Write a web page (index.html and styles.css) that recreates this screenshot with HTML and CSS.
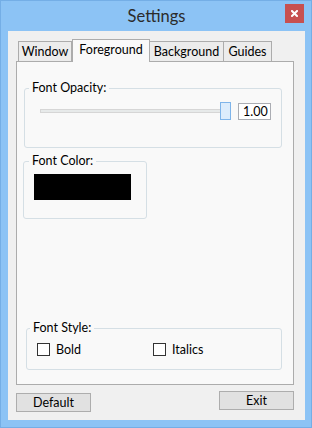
FILE: index.html
```html
<!DOCTYPE html>
<html lang="en">

<head>
  <meta charset="UTF-8">
  <meta name="viewport" content="width=device-width, initial-scale=1.0">
  <title>Settings</title>
  <link rel="stylesheet" href="styles.css">
</head>

<body>
  <div class="window">
    <div class="titlebar">
      <span class="title">Settings</span>
      <button class="close-btn" aria-label="Close">
        <svg width="7" height="7" viewBox="0 0 7 7">
          <path d="M1 1 L6 6 M6 1 L1 6" stroke="#fff" stroke-width="2" stroke-linecap="square" />
        </svg>
      </button>
    </div>

    <div class="client">
      <div class="tabs">
        <div class="tab tab-window">Window</div>
        <div class="tab tab-foreground selected">Foreground</div>
        <div class="tab tab-background">Background</div>
        <div class="tab tab-guides">Guides</div>
      </div>

      <div class="tab-panel">
        <fieldset class="group opacity-group">
          <legend>Font Opacity:</legend>
          <div class="slider-row">
            <div class="slider-track"></div>
            <div class="slider-thumb"></div>
            <div class="textbox">1.00</div>
          </div>
        </fieldset>

        <fieldset class="group color-group">
          <legend>Font Color:</legend>
          <div class="color-swatch"></div>
        </fieldset>

        <fieldset class="group style-group">
          <legend>Font Style:</legend>
          <div class="check-row">
            <label class="check"><span class="box"></span>Bold</label>
            <label class="check"><span class="box"></span>Italics</label>
          </div>
        </fieldset>
      </div>

      <div class="buttons">
        <button class="btn btn-default">Default</button>
        <button class="btn btn-exit">Exit</button>
      </div>
    </div>
  </div>
</body>

</html>
```

FILE: styles.css
```css
* {
  box-sizing: border-box;
}

body {
  margin: 0;
  font-family: Lato, "Noto Sans", sans-serif;
  font-size: 12.5px;
  color: #000;
}

.window {
  width: 312px;
  height: 428px;
  background: #8cc3f5;
  border: 1px solid #74aee6;
  padding: 0 6px 7px 7px;
  display: flex;
  flex-direction: column;
}

.titlebar {
  height: 30px;
  display: grid;
  grid-template-columns: 1fr auto 1fr;
  align-items: center;
}

.title {
  grid-column: 2;
  font-size: 16.5px;
  color: #2b2b2b;
  margin-top: -1px;
}

.close-btn {
  grid-column: 3;
  justify-self: end;
  width: 19px;
  height: 19px;
  margin-top: -5px;
  margin-right: 1px;
  padding: 0;
  border: none;
  background: #c75050;
  display: flex;
  align-items: center;
  justify-content: center;
}

.client {
  flex: 1;
  background: #f0f0f0;
  padding: 8px 11px 0 8px;
  display: flex;
  flex-direction: column;
}

/* tab strip */
.tabs {
  display: flex;
  align-items: flex-end;
  height: 22px;
  padding-left: 2px;
}

.tab {
  height: 20px;
  border: 1px solid #acacac;
  border-bottom: none;
  background: #ececec;
  display: flex;
  align-items: center;
  justify-content: center;
  padding-bottom: 1px;
  white-space: nowrap;
}

.tab-window {
  width: 54px;
}

.tab-foreground {
  width: 78px;
}

.tab-background {
  width: 75px;
  margin-left: -1px;
}

.tab-guides {
  width: 49px;
  margin-left: -1px;
}

.tab.selected {
  height: 23px;
  margin-bottom: -1px;
  background: #f9f9f9;
  position: relative;
  z-index: 1;
  padding-bottom: 3px;
}

.tab-panel {
  height: 324px;
  border: 1px solid #acacac;
  background: #f9f9f9;
  display: flex;
  flex-direction: column;
  padding-bottom: 14px;
}

/* group boxes */
.group {
  margin: 0;
  border: 1px solid #d5dfe5;
  border-radius: 3px;
  padding: 0;
}

.group legend {
  line-height: 16px;
  padding: 0 3px;
}

.opacity-group {
  margin: 18px 11px 0 7px;
  padding: 6px 10px 27px 15px;
}

.opacity-group legend {
  margin-left: -11px;
}

.slider-row {
  display: flex;
  align-items: center;
  height: 18px;
}

.slider-track {
  width: 182px;
  height: 4px;
  background: #e7eaea;
  border: 1px solid #d6d6d6;
}

.slider-thumb {
  width: 11px;
  height: 18px;
  margin-left: -2px;
  background: #dcecfc;
  border: 1px solid #7eb4ea;
}

.textbox {
  width: 33px;
  height: 17px;
  margin-left: 7px;
  background: #fff;
  border: 1px solid #abadb3;
  padding-left: 4px;
  line-height: 15px;
}

.color-group {
  width: 124px;
  margin: 5px 0 0 6px;
  padding: 5px 0 18px 10px;
}

.color-group legend {
  margin-left: -5px;
}

.color-swatch {
  width: 97px;
  height: 26px;
  background: #000;
}

.style-group {
  margin: auto 11px 0 9px;
  padding: 6px 0 12px 10px;
}

.style-group legend {
  margin-left: -7px;
}

.check-row {
  display: flex;
}

.check {
  width: 116px;
  display: flex;
  align-items: center;
  line-height: 15px;
}

.check .box {
  width: 13px;
  height: 13px;
  border: 1px solid #333;
  background: #fff;
  margin-right: 6px;
}

/* bottom buttons */
.buttons {
  display: flex;
  justify-content: space-between;
  align-items: flex-start;
  margin-top: 6px;
}

.btn {
  width: 75px;
  height: 19px;
  padding: 0;
  background: #e1e1e1;
  border: 1px solid #adadad;
  font-family: inherit;
  font-size: 12.5px;
  color: #000;
  line-height: 15px;
}

.btn-default {
  margin-top: 2px;
}
```
